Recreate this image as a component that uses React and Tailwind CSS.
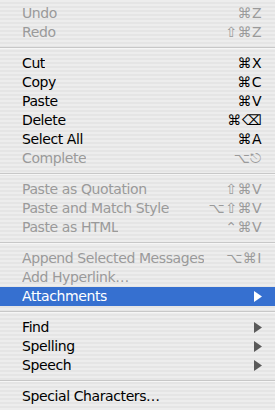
import React from 'react';

const items = [
  { label: 'Undo', key: '⌘Z', disabled: true },
  { label: 'Redo', key: '⇧⌘Z', disabled: true },
  { sep: true },
  { label: 'Cut', key: '⌘X' },
  { label: 'Copy', key: '⌘C' },
  { label: 'Paste', key: '⌘V' },
  { label: 'Delete', key: '⌘⌫' },
  { label: 'Select All', key: '⌘A' },
  { label: 'Complete', key: '⌥⎋', disabled: true },
  { sep: true },
  { label: 'Paste as Quotation', key: '⇧⌘V', disabled: true },
  { label: 'Paste and Match Style', key: '⌥⇧⌘V', disabled: true },
  { label: 'Paste as HTML', key: '⌃⌘V', disabled: true },
  { sep: true },
  { label: 'Append Selected Messages', key: '⌥⌘I', disabled: true },
  { label: 'Add Hyperlink…', disabled: true },
  { label: 'Attachments', submenu: true, active: true },
  { sep: true },
  { label: 'Find', submenu: true },
  { label: 'Spelling', submenu: true },
  { label: 'Speech', submenu: true },
  { sep: true },
  { label: 'Special Characters…' },
];

const Arrow = ({ color }) => (
  <svg width="8" height="11" viewBox="0 0 8 11">
    <path d="M0 0 L8 5.5 L0 11 Z" fill={color} />
  </svg>
);

const MenuRow = ({ item }) => {
  const text = item.active ? 'text-white' : item.disabled ? 'text-[#9a9a9a]' : 'text-black';
  const bg = item.active ? 'bg-[#3670d0]' : '';
  return (
    <div className={`flex items-center justify-between h-[19px] pl-[22px] pr-[13px] ${bg} ${text}`}>
      <span className="truncate tracking-[-0.4px]">{item.label}</span>
      {item.submenu ? (
        <Arrow color={item.active ? '#ffffff' : '#5a5a5a'} />
      ) : (
        <span className="tracking-[0.5px]">{item.key}</span>
      )}
    </div>
  );
};

export default function App() {
  return (
    <div
      className="w-[275px] h-[410px] overflow-hidden pt-1 text-[14px] leading-[19px] bg-[repeating-linear-gradient(to_bottom,#ededed_0px,#ededed_2px,#e5e5e5_2px,#e5e5e5_4px)]"
      style={{ fontFamily: '"DejaVu Sans", "Liberation Sans", sans-serif' }}
    >
      {items.map((item, i) =>
        item.sep ? (
          <div key={i} className="h-3 flex flex-col justify-center">
            <div className="h-px bg-[#c8c8c8]" />
            <div className="h-px bg-[#f6f6f6]" />
          </div>
        ) : (
          <MenuRow key={i} item={item} />
        )
      )}
    </div>
  );
}
